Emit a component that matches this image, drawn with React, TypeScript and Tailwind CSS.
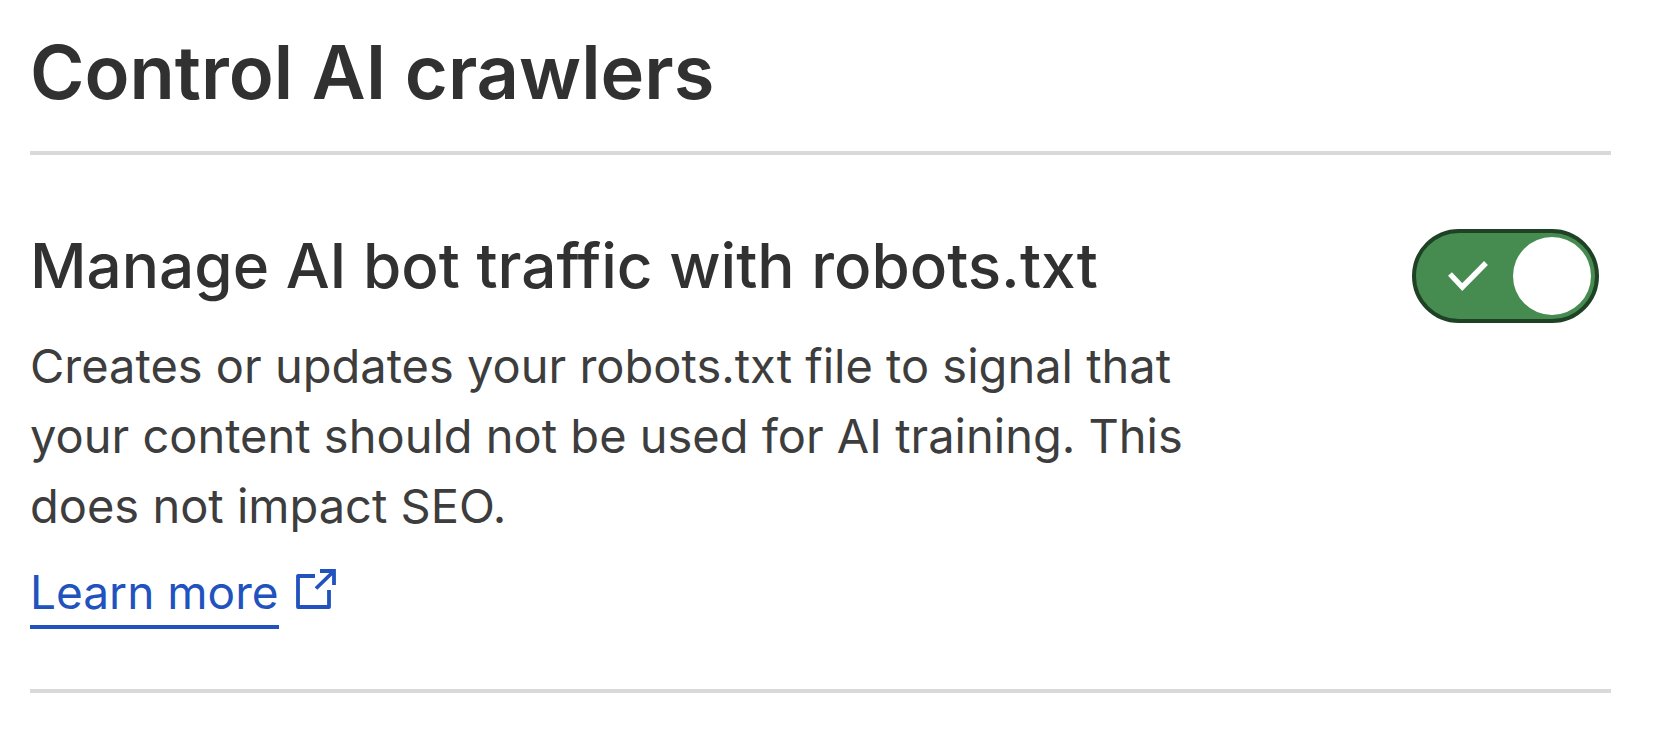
import { useState } from "react";

const description =
  "Creates or updates your robots.txt file to signal that your content should not be used for AI training. This does not impact SEO.";

interface ToggleProps {
  checked: boolean;
  onChange: (checked: boolean) => void;
  labelledBy: string;
}

function Toggle({ checked, onChange, labelledBy }: ToggleProps) {
  return (
    <button
      type="button"
      role="switch"
      aria-checked={checked}
      aria-labelledby={labelledBy}
      onClick={() => onChange(!checked)}
      className={`flex h-[94px] w-[187px] shrink-0 items-center rounded-full border-4 px-1 ${
        checked ? "justify-between border-[#1f4226] bg-[#468b50]" : "justify-start border-[#797979] bg-[#b6b6b6]"
      }`}
    >
      {checked ? (
        <svg viewBox="0 0 40 30" className="ml-7 h-[30px] w-10" fill="none" stroke="white" strokeWidth="5.4" aria-hidden="true">
          <path d="M2 13 14.3 26 38 2" />
        </svg>
      ) : null}
      <span className="h-[78px] w-[78px] rounded-full bg-white" />
    </button>
  );
}

function ExternalIcon() {
  return (
    <svg viewBox="0 0 42 42" className="mt-[7px] h-[42px] w-[42px]" fill="none" stroke="currentColor" strokeWidth="3.8" aria-hidden="true">
      <path d="M20 8H3v31h31V22" strokeLinejoin="round" />
      <path d="M25 3h14v14M38.500 3.500 21 20.500" />
    </svg>
  );
}

export default function App() {
  const [enabled, setEnabled] = useState(true);

  return (
    <main className="bg-white pt-[30px] pr-[43px] pl-[30px] font-['Inter',sans-serif] text-[#313131]">
      <h1 className="border-b-4 border-[#d9d9d9] pb-[37px] text-[74px] leading-[84px] font-semibold">Control AI crawlers</h1>

      <section className="flex items-start justify-between border-b-4 border-[#d9d9d9] pt-[74px] pr-3 pb-[60px]">
        <div className="max-w-[1180px]">
          <h2 id="robots-title" className="text-[62px] leading-[74px] font-medium">
            Manage AI bot traffic with robots.txt
          </h2>
          <p className="mt-7 text-[47px] leading-[70px] text-[#3d3d3d]">{description}</p>
          <a href="#" className="mt-5 flex w-fit items-start gap-4 text-[46px] leading-[62px] text-[#2152bd]">
            <span className="border-b-4 pb-[2px]">Learn more</span>
            <ExternalIcon />
          </a>
        </div>
        <Toggle checked={enabled} onChange={setEnabled} labelledBy="robots-title" />
      </section>
    </main>
  );
}
